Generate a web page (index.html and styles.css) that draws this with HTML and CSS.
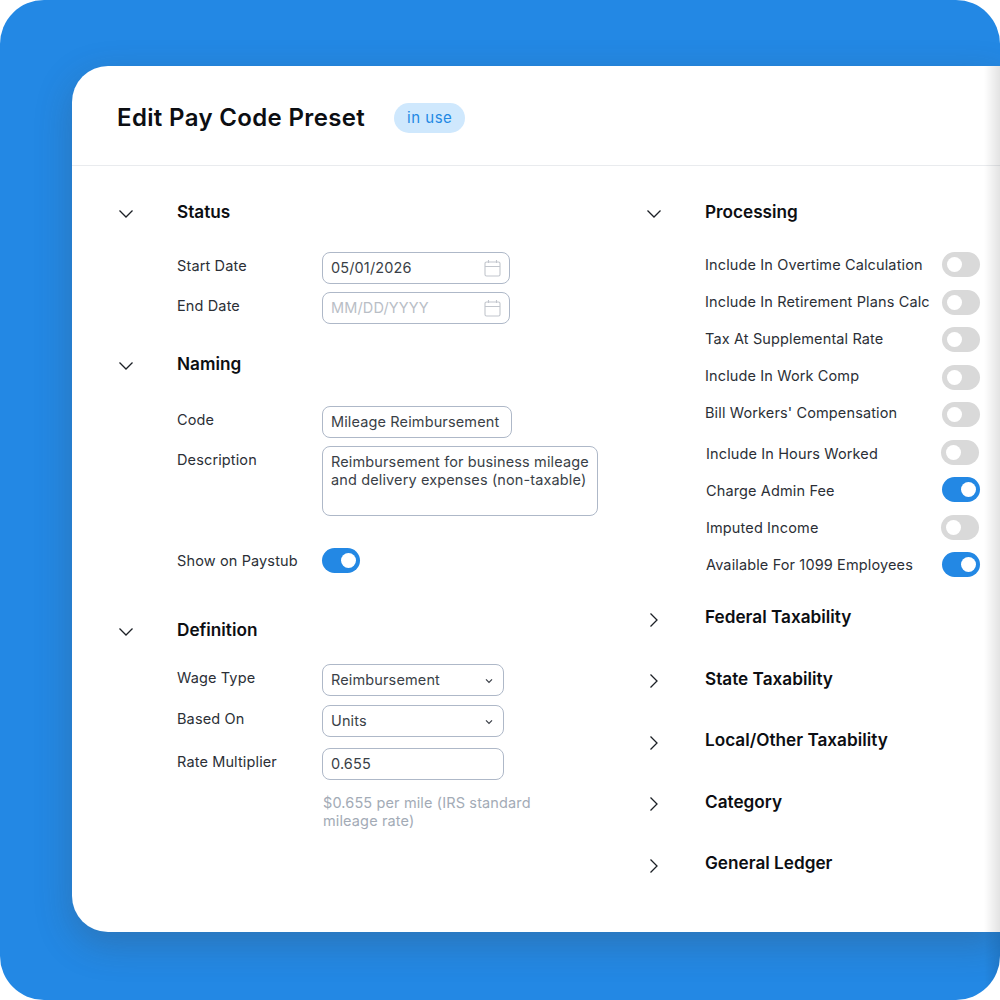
FILE: index.html
```html
<!DOCTYPE html>
<html lang="en">
<head>
<meta charset="utf-8">
<title>Edit Pay Code Preset</title>
<link rel="stylesheet" href="styles.css">
</head>
<body>
<svg width="0" height="0" class="defs">
  <symbol id="down" viewBox="0 0 16 10"><path d="M1.5 1.5 8 8l6.500-6.500" fill="none" stroke="currentColor" stroke-width="1.300"/></symbol>
  <symbol id="right" viewBox="0 0 10 16"><path d="M1.500 1.500 8 8l-6.500 6.500" fill="none" stroke="currentColor" stroke-width="1.300"/></symbol>
  <symbol id="cal" viewBox="0 0 17 18"><path d="M2.500 3h12a1.500 1.500 0 0 1 1.500 1.500v11a1.500 1.500 0 0 1-1.500 1.500h-12A1.500 1.500 0 0 1 1 15.500v-11A1.500 1.500 0 0 1 2.500 3ZM1 7.500h15M4.500 1v3M12.500 1v3" fill="none" stroke="currentColor" stroke-width="1.100"/></symbol>
  <symbol id="sel" viewBox="0 0 8 6"><path d="M1 1.300 4 4.300l3-3" fill="none" stroke="currentColor" stroke-width="1.200"/></symbol>
</svg>
<main class="frame">
  <section class="card">
    <header class="card-head">
      <h1>Edit Pay Code Preset</h1>
      <span class="badge">in use</span>
    </header>
    <div class="columns">
      <div class="col-left">
        <div class="sec sec-status">
          <h2 class="sec-head"><svg class="chev-down"><use href="#down"/></svg>Status</h2>
          <div class="field-row gap8"><span class="lbl">Start Date</span><div class="input w188"><span>05/01/2026</span><svg class="cal"><use href="#cal"/></svg></div></div>
          <div class="field-row"><span class="lbl">End Date</span><div class="input w188 muted"><span>MM/DD/YYYY</span><svg class="cal"><use href="#cal"/></svg></div></div>
        </div>
        <div class="sec sec-naming">
          <h2 class="sec-head"><svg class="chev-down"><use href="#down"/></svg>Naming</h2>
          <div class="field-row gap8"><span class="lbl">Code</span><div class="input w190">Mileage Reimbursement</div></div>
          <div class="field-row"><span class="lbl">Description</span><div class="input textarea">Reimbursement for business mileage and delivery expenses (non-taxable)</div></div>
          <div class="field-row paystub"><span class="lbl lbl-center">Show on Paystub</span><span class="toggle on"></span></div>
        </div>
        <div class="sec sec-def">
          <h2 class="sec-head"><svg class="chev-down"><use href="#down"/></svg>Definition</h2>
          <div class="field-row gap9"><span class="lbl">Wage Type</span><div class="input w182">Reimbursement<svg class="sel"><use href="#sel"/></svg></div></div>
          <div class="field-row gap11"><span class="lbl">Based On</span><div class="input w182">Units<svg class="sel"><use href="#sel"/></svg></div></div>
          <div class="field-row"><span class="lbl">Rate Multiplier</span><div class="input w182">0.655</div></div>
          <p class="hint">$0.655 per mile (IRS standard mileage rate)</p>
        </div>
      </div>
      <div class="col-right">
        <div class="sec sec-proc">
          <h2 class="sec-head"><svg class="chev-down"><use href="#down"/></svg>Processing</h2>
          <div class="proc-grid">
            <ul class="labels">
              <li>Include In Overtime Calculation</li>
              <li>Include In Retirement Plans Calc</li>
              <li>Tax At Supplemental Rate</li>
              <li>Include In Work Comp</li>
              <li>Bill Workers' Compensation</li>
              <li class="second">Include In Hours Worked</li>
              <li class="nudge">Charge Admin Fee</li>
              <li class="nudge">Imputed Income</li>
              <li class="nudge">Available For 1099 Employees</li>
            </ul>
            <div class="toggles">
              <span class="toggle"></span>
              <span class="toggle"></span>
              <span class="toggle"></span>
              <span class="toggle"></span>
              <span class="toggle"></span>
              <span class="toggle back"></span>
              <span class="toggle on"></span>
              <span class="toggle back"></span>
              <span class="toggle on"></span>
            </div>
          </div>
        </div>
        <div class="collapsed">
          <h2 class="sec-head"><svg class="chev-right"><use href="#right"/></svg>Federal Taxability</h2>
          <h2 class="sec-head"><svg class="chev-right"><use href="#right"/></svg>State Taxability</h2>
          <h2 class="sec-head"><svg class="chev-right"><use href="#right"/></svg>Local/Other Taxability</h2>
          <h2 class="sec-head"><svg class="chev-right"><use href="#right"/></svg>Category</h2>
          <h2 class="sec-head"><svg class="chev-right"><use href="#right"/></svg>General Ledger</h2>
        </div>
      </div>
    </div>
  </section>
  <div class="edge"></div>
</main>
</body>
</html>
```
FILE: styles.css
```css
* { box-sizing: border-box; }
html, body { margin: 0; padding: 0; background: #fff; }
body { font-family: Inter, "Liberation Sans", sans-serif; color: #2b2f36; }
.defs { position: absolute; }
.frame {
  position: relative;
  width: 1000px;
  height: 1000px;
  padding: 66px 0 68px 72px;
  background: #2388e4;
  border-radius: 44px;
  overflow: hidden;
}
.card {
  height: 866px;
  background: #fff;
  border-radius: 36px 0 0 36px;
  box-shadow: 0 12px 36px rgba(70, 70, 70, 0.28);
}
.edge {
  position: absolute;
  top: 66px;
  right: 0;
  bottom: 0;
  width: 16px;
  background: linear-gradient(to right, rgba(0,0,0,0), rgba(0,0,0,0.11));
  pointer-events: none;
}
.card-head {
  display: flex;
  align-items: center;
  height: 100px;
  padding: 0 0 0 45px;
  border-bottom: 1px solid #e9ebee;
}
h1 { margin: 0 29px 0 0; font-size: 24px; font-weight: 600; letter-spacing: 0.35px; color: #0c0e12; line-height: 30px; position: relative; top: 2px; }
.badge {
  display: flex;
  align-items: center;
  justify-content: center;
  width: 71px;
  height: 30px;
  margin-top: 4px;
  border-radius: 15px;
  background: #cfe8fd;
  color: #2388e4;
  font-size: 15px;
  letter-spacing: 0.5px;
}
.columns { display: flex; padding: 34px 0 0 45px; }
.col-left { width: 528px; flex: none; }
.col-right { flex: 1; }
.sec-head {
  display: flex;
  align-items: center;
  height: 24px;
  margin: 0;
  font-size: 17.200px;
  font-weight: 600;
  color: #0c0e12;
  line-height: 24px;
}
.chev-down { width: 16px; height: 10px; margin: 4px 43px 0 1px; color: #1c2026; flex: none; }
.chev-right { width: 10px; height: 16px; margin: 5px 46px 0 4px; color: #1c2026; flex: none; }
.sec-status .sec-head, .sec-proc .sec-head { margin-bottom: 28px; }
.sec-naming { margin-top: 28px; }
.sec-naming .sec-head { margin-bottom: 30px; }
.sec-def { margin-top: 45px; }
.sec-def .sec-head { margin-bottom: 22px; }
.field-row { display: flex; align-items: flex-start; padding-left: 60px; font-size: 14.500px; letter-spacing: 0.13px; }
.gap8 { margin-bottom: 8px; }
.gap9 { margin-bottom: 9px; }
.gap11 { margin-bottom: 11px; }
.lbl { width: 145px; flex: none; line-height: 18px; padding-top: 5px; }
.lbl-center { padding-top: 4px; }
.input {
  display: flex;
  align-items: center;
  justify-content: space-between;
  height: 32px;
  padding: 0 10px 1px 8px;
  border: 1.500px solid #aeb8c8;
  border-radius: 8px;
  color: #3a3f47;
  line-height: 18px;
}
.w188 { width: 188px; }
.w190 { width: 190px; }
.w182 { width: 182px; }
.muted { color: #b9bec6; }
.textarea { display: block; width: 276px; height: 70px; padding: 6px 8px; }
.cal { width: 17px; height: 18px; color: #c2c6cd; margin: 0 -2px -1px 0; }
.sel { width: 8px; height: 6px; color: #3a3f47; margin: 2px 0 0 0; }
.paystub { margin-top: 32px; }
.hint { margin: 14px 0 0 206px; width: 230px; font-size: 14.500px; letter-spacing: 0.13px; line-height: 18px; color: #a3abb6; }
.proc-grid { display: flex; padding-left: 60px; }
.labels { list-style: none; margin: 0; padding: 0; width: 237px; flex: none; font-size: 14.500px; letter-spacing: 0.13px; line-height: 18px; }
.labels li { height: 37px; padding-top: 4px; }
.labels .second { margin-top: 4px; padding-left: 1px; }
.labels .nudge { padding-left: 1px; }
.toggles { display: flex; flex-direction: column; gap: 12.500px; }
.toggle { display: block; position: relative; width: 38px; height: 25px; border-radius: 13px; background: #d9d9d9; flex: none; }
.toggle::after { content: ""; position: absolute; top: 5px; left: 5px; width: 15px; height: 15px; border-radius: 50%; background: #fff; }
.toggle.on { background: #2388e4; }
.toggle.on::after { left: 19px; }
.toggle.back { margin-left: -1px; }
.collapsed { display: flex; flex-direction: column; gap: 37.500px; margin-top: 16px; }
```
